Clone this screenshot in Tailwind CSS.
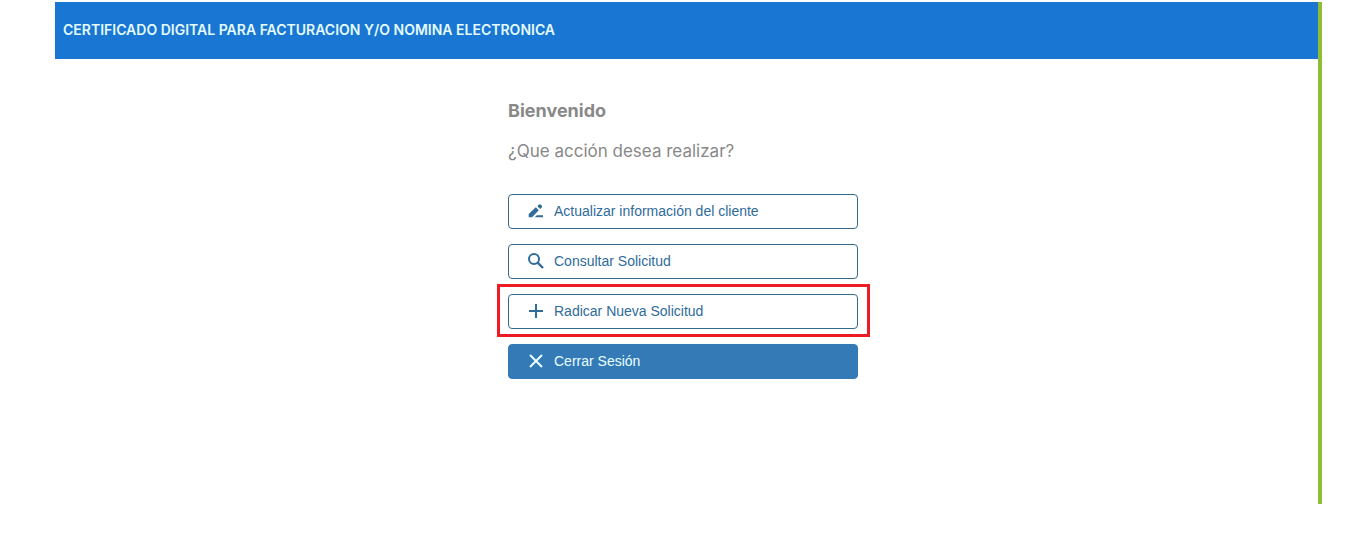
<!DOCTYPE html>
<html lang="es">
<head>
    <meta charset="UTF-8">
    <meta name="viewport" content="width=device-width, initial-scale=1.0">
    <title>Certificado Digital</title>
    <!-- Tailwind CSS CDN -->
    <script src="https://cdn.jsdelivr.net/npm/@tailwindcss/browser@4"></script>
</head>
<body class="bg-white flex flex-col min-h-screen pt-[2px] pb-[53px] pl-[55px] pr-[37px]">
    <div class="grow flex flex-col border-r-4 border-[#8fbc35]">
        <header class="bg-[#1976d2] px-2 pt-[18px] pb-[19px]">
            <h1 class="font-['Inter',sans-serif] text-sm leading-5 font-semibold text-[#e3fbff]">CERTIFICADO DIGITAL PARA FACTURACION Y/O NOMINA ELECTRONICA</h1>
        </header>
        <main class="w-full pt-10 pr-[7px]">
            <div class="w-full max-w-[350px] mx-auto">
                <div class="font-['Inter',sans-serif] text-[#888888]">
                    <h2 class="text-[18px] leading-6 font-bold">Bienvenido</h2>
                    <p class="mt-4 text-[17px] leading-6">¿Que acción desea realizar?</p>
                </div>
                <nav class="mt-[31px] flex flex-col gap-[15px] font-['Liberation_Sans',Arial,sans-serif] text-sm leading-5">
                    <button type="button" class="w-full h-[35px] px-[18px] pb-[2px] flex items-center gap-[9px] border border-[#346a8c] rounded text-[#2f6b9b]">
                        <svg class="size-[18px]" viewBox="0 0 18 18" fill="currentColor" aria-hidden="true">
                            <path d="M1.700 15.300v-3.400L8.800 5.200l3 3L5.100 15.300zM10.400 4.200l1.500-1.600q.9-.8 1.800 0l1 1q.8.900 0 1.800L13.200 6.900zM7.800 15.300l2-2H16v2z"/>
                        </svg>
                        Actualizar información del cliente
                    </button>
                    <button type="button" class="w-full h-[35px] px-[18px] pb-[2px] flex items-center gap-[9px] border border-[#346a8c] rounded text-[#2f6b9b]">
                        <svg class="size-[18px]" viewBox="0 0 18 18" fill="none" stroke="currentColor" stroke-width="2" aria-hidden="true">
                            <circle cx="7" cy="7" r="5"/>
                            <path d="M10.500 10.500l5.500 5.500" stroke-width="2.400"/>
                        </svg>
                        Consultar Solicitud
                    </button>
                    <div class="relative">
                        <button type="button" class="w-full h-[35px] px-[18px] pb-[2px] flex items-center gap-[9px] border border-[#346a8c] rounded text-[#2f6b9b]">
                            <svg class="size-[18px]" viewBox="0 0 18 18" fill="none" stroke="currentColor" stroke-width="2" aria-hidden="true">
                                <path d="M9 2v14M2 9h14"/>
                            </svg>
                            Radicar Nueva Solicitud
                        </button>
                        <!-- Highlight around the option -->
                        <div class="absolute -top-[10px] -bottom-2 -left-[11px] -right-3 border-3 border-[#ed1c24] pointer-events-none"></div>
                    </div>
                    <button type="button" class="w-full h-[35px] px-[18px] pb-[2px] flex items-center gap-[9px] border border-[#337ab7] rounded bg-[#337ab7] text-[#eaffff]">
                        <svg class="size-[18px]" viewBox="0 0 18 18" fill="none" stroke="currentColor" stroke-width="2" aria-hidden="true">
                            <path d="M3 3l12 12M15 3L3 15"/>
                        </svg>
                        Cerrar Sesión
                    </button>
                </nav>
            </div>
        </main>
    </div>
</body>
</html>
